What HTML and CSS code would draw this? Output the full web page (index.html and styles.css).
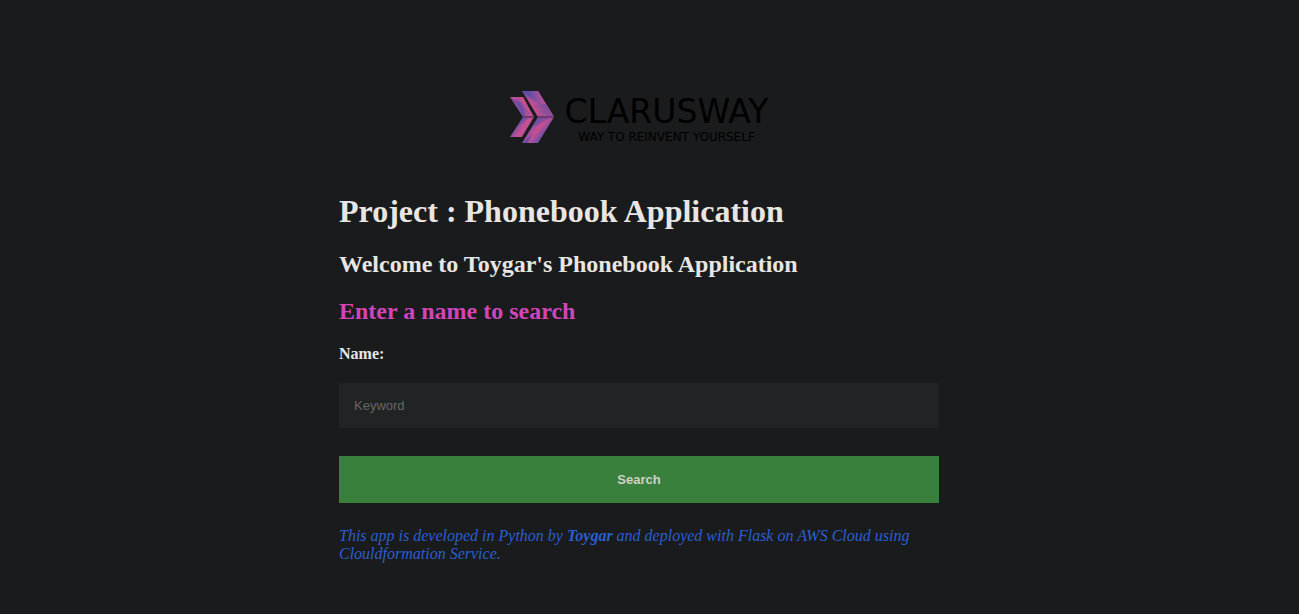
FILE: index.html
```html
<!DOCTYPE html>
<html lang="en">
<head>
<meta charset="utf-8">
<title>Phonebook Application</title>
<link rel="stylesheet" href="styles.css">
</head>
<body>
<main class="page">
  <div class="content">
    <div class="logo">
      <svg class="logo-mark" viewBox="0 0 44 52" aria-hidden="true">
        <defs>
          <linearGradient id="upper-left" gradientUnits="userSpaceOnUse" x1="12" y1="0" x2="30" y2="26">
            <stop offset="0" stop-color="#5a4ea6"/><stop offset=".4" stop-color="#b84d95"/><stop offset="1" stop-color="#d24e8c"/>
          </linearGradient>
          <linearGradient id="upper-right" gradientUnits="userSpaceOnUse" x1="20" y1="10" x2="36" y2="6">
            <stop offset="0" stop-color="#5a4fa5"/><stop offset=".5" stop-color="#9450a0"/><stop offset="1" stop-color="#c84f92"/>
          </linearGradient>
          <linearGradient id="upper-tip" gradientUnits="userSpaceOnUse" x1="26" y1="24" x2="41" y2="16">
            <stop offset="0" stop-color="#c34e92"/><stop offset=".5" stop-color="#77509f"/><stop offset=".75" stop-color="#5a4ea6"/><stop offset="1" stop-color="#c94f92"/>
          </linearGradient>
          <linearGradient id="lower-outer" gradientUnits="userSpaceOnUse" x1="20" y1="32" x2="33" y2="43">
            <stop offset="0" stop-color="#614fa5"/><stop offset=".4" stop-color="#aa509a"/><stop offset=".6" stop-color="#cb4e90"/><stop offset="1" stop-color="#7951a2"/>
          </linearGradient>
          <linearGradient id="inner-left" gradientUnits="userSpaceOnUse" x1="4" y1="16" x2="19" y2="11">
            <stop offset="0" stop-color="#a54f9a"/><stop offset=".45" stop-color="#6650a4"/><stop offset=".55" stop-color="#a24f9b"/><stop offset="1" stop-color="#d9508c"/>
          </linearGradient>
          <linearGradient id="inner-lower" gradientUnits="userSpaceOnUse" x1="6" y1="32" x2="18" y2="40">
            <stop offset="0" stop-color="#6250a5"/><stop offset=".45" stop-color="#b34f98"/><stop offset=".65" stop-color="#d14e8e"/><stop offset="1" stop-color="#9051a0"/>
          </linearGradient>
        </defs>
        <path fill="url(#upper-left)" d="M12 0H28L44 26H28Z"/>
        <path fill="url(#upper-right)" d="M12 0H28L44 26Z"/>
        <path fill="url(#upper-tip)" d="M24 14L36 13L44 26H28Z" opacity=".65"/>
        <path fill="url(#lower-outer)" d="M28 26H44L28 52H12Z"/>
        <path fill="#5a4fa5" d="M28 26H42L25 35L22 36Z" opacity=".55"/>
        <path fill="#514ca6" d="M12 52L22 43L18 52Z" opacity=".75"/>
        <path fill="url(#inner-left)" d="M0 6H13L24 26H13Z"/>
        <path fill="#d44f8d" d="M0 6H13L18 15Z" opacity=".65"/>
        <path fill="#574da5" d="M0 6L24 26L9 15Z" opacity=".7"/>
        <path fill="url(#inner-lower)" d="M13 26H24L12 46H0Z"/>
        <path fill="#5e4fa5" d="M13 26H20L7 36Z" opacity=".5"/>
        <path stroke="#713b72" stroke-width="2" d="M13 26H24M28 26H44"/>
      </svg>
      <div class="logo-text">
        <span class="logo-name">CLARUSWAY</span>
        <span class="logo-tagline">WAY TO REINVENT YOURSELF</span>
      </div>
    </div>
    <h1 class="title">Project : Phonebook Application</h1>
    <h2 class="subtitle">Welcome to Toygar's Phonebook Application</h2>
    <h2 class="subtitle prompt">Enter a name to search</h2>
    <form class="search-form">
      <label class="field-label" for="name">Name:</label>
      <input class="field" id="name" type="text" placeholder="Keyword">
      <button class="search-button" type="submit">Search</button>
    </form>
    <p class="credit">This app is developed in Python by <strong>Toygar</strong> and deployed with Flask on AWS Cloud using Clouldformation Service.</p>
  </div>
</main>
</body>
</html>
```
FILE: styles.css
```css
* { box-sizing: border-box; }

body {
  margin: 0;
  background: #1a1b1c;
  color: #e8e6e3;
  font: 16px/18px "Liberation Serif", "Times New Roman", serif;
}

.page { padding: 91px 21px 50px 0; }

.content { max-width: 600px; margin: 0 auto; }

.logo {
  display: flex;
  justify-content: center;
  gap: 11px;
  margin-bottom: 49px;
  color: #000;
  font-family: "DejaVu Sans", Verdana, sans-serif;
}

.logo-mark { width: 44px; height: 52px; }

.logo-text {
  display: flex;
  flex-direction: column;
  align-items: center;
  padding-top: 2px;
}

.logo-name { font-size: 33px; line-height: 37px; }

.logo-tagline { font-size: 12px; line-height: 14px; }

.title { margin: 0 0 21px; font-size: 32px; line-height: 37px; }

.subtitle { margin: 0 0 20px; font-size: 24px; line-height: 27px; }

.prompt { color: #d046b9; }

.search-form { display: flex; flex-direction: column; }

.field-label { margin-bottom: 20px; font-weight: bold; }

.field {
  height: 45px;
  margin-bottom: 28px;
  padding: 15px;
  border: 0;
  background: #202425;
  color: #e8e6e3;
  font: 13px/15px "Liberation Sans", Arial, sans-serif;
}

.field::placeholder { color: #696661; opacity: 1; }

.search-button {
  height: 47px;
  margin-bottom: 24px;
  border: 0;
  background: #3a803d;
  color: #d0d0c8;
  font: bold 13px/15px "Liberation Sans", Arial, sans-serif;
}

.credit { margin: 0; color: #2b5fd0; font-style: italic; }
```
